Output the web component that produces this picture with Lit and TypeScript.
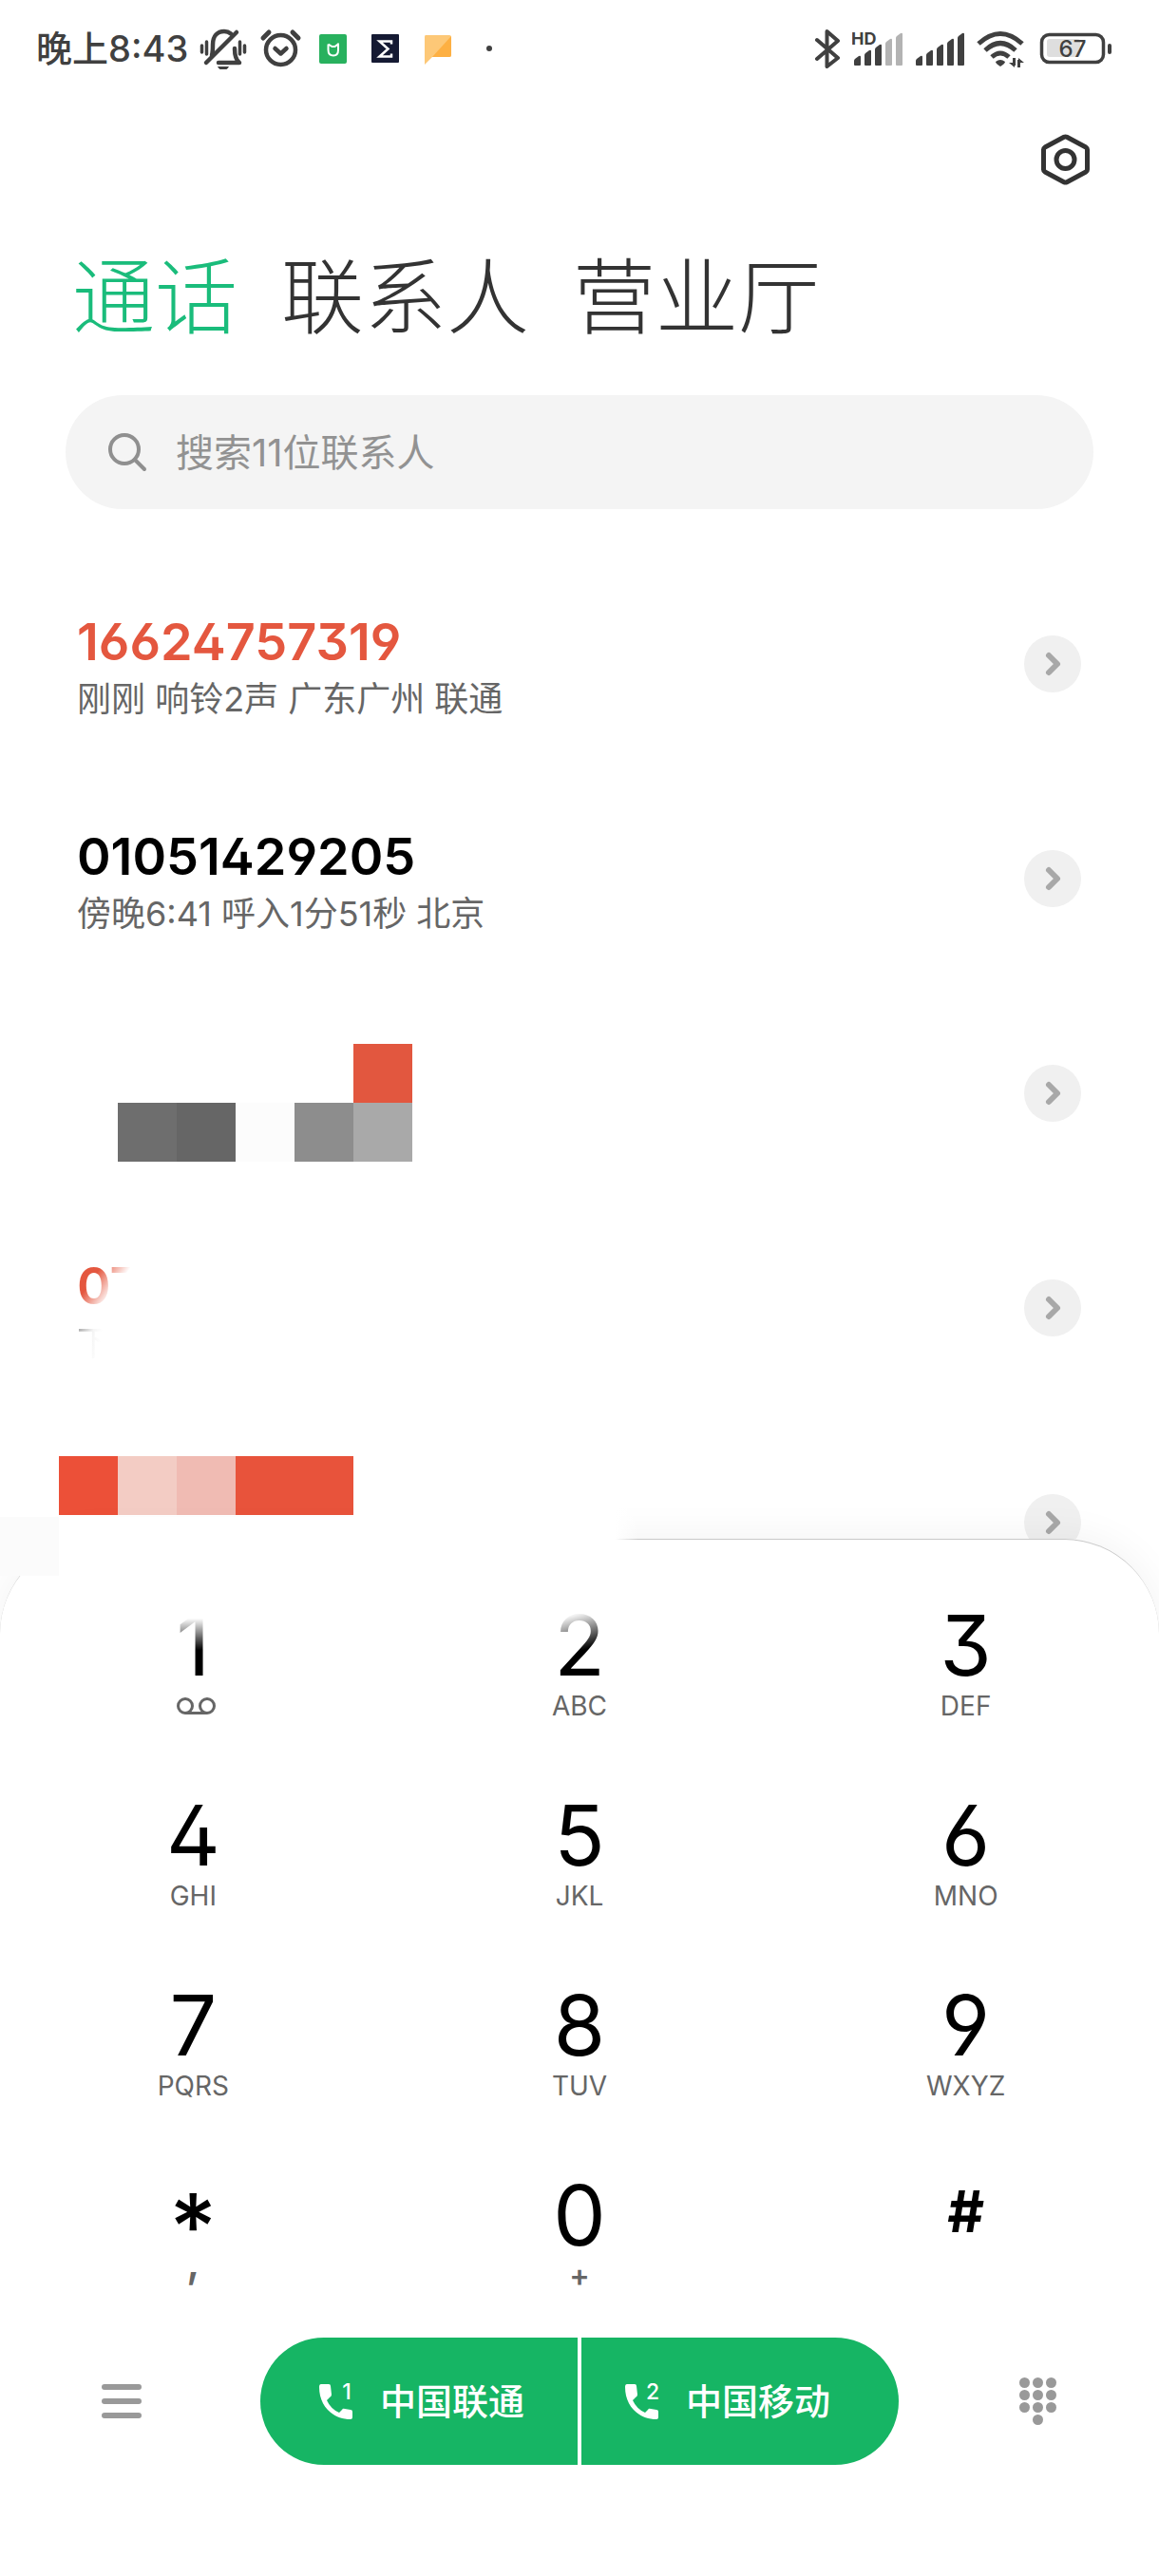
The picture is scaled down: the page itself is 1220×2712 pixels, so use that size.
import { LitElement, html, css, svg, nothing } from "lit";
import { customElement, property } from "lit/decorators.js";
import { classMap } from "lit/directives/class-map.js";

interface CallRecord {
  number?: string;
  detail?: string;
  missed?: boolean;
  faded?: boolean;
  tiles?: string[];
  tileTop?: "low" | "high";
}

const CALLS: CallRecord[] = [
  { number: "16624757319", detail: "刚刚 响铃2声 广东广州 联通", missed: true },
  { number: "01051429205", detail: "傍晚6:41 呼入1分51秒 北京" },
  {
    tiles: ["", "", "", "", "", "t-red", "", "t-g1", "t-g2", "t-pale", "t-g3", "t-g4"],
    tileTop: "low",
  },
  { number: "07", detail: "下", missed: true, faded: true },
  { tiles: ["t-r1", "t-r2", "t-r3", "t-r4", "t-r4", ""], tileTop: "high" },
];

const KEYS: { digit: string; sub: string; kind?: string }[] = [
  { digit: "1", sub: "voicemail", kind: "fade-one" },
  { digit: "2", sub: "ABC", kind: "fade-two" },
  { digit: "3", sub: "DEF" },
  { digit: "4", sub: "GHI" },
  { digit: "5", sub: "JKL" },
  { digit: "6", sub: "MNO" },
  { digit: "7", sub: "PQRS" },
  { digit: "8", sub: "TUV" },
  { digit: "9", sub: "WXYZ" },
  { digit: "*", sub: ",", kind: "star" },
  { digit: "0", sub: "+", kind: "zero" },
  { digit: "#", sub: "", kind: "hash" },
];

const FONT = css`Inter, "Noto Sans CJK SC", sans-serif`;

@customElement("status-bar")
class StatusBar extends LitElement {
  static styles = css`
    :host {
      display: flex;
      align-items: center;
      justify-content: space-between;
      height: 102px;
      padding: 0 50px 0 38px;
      color: #404040;
      font-family: ${FONT};
    }
    .side {
      display: flex;
      align-items: center;
    }
    .right {
      gap: 13px;
    }
    .time {
      margin-right: 8px;
      font-size: 38px;
      font-weight: 500;
      line-height: 48px;
      white-space: nowrap;
    }
    svg {
      display: block;
      flex: none;
    }
    .label {
      font-family: ${FONT};
      fill: #404040;
    }
    .hd {
      font-size: 18px;
      font-weight: 700;
    }
    .level {
      font-size: 24px;
      font-weight: 500;
    }
  `;

  private bars(x: number, lit: number) {
    return [0, 1, 2, 3, 4].map((i) => {
      const left = x + i * 11;
      const top = 27 - i * 6;
      return svg`<path
        d="M${left} 35V${top + 4}q0-1 1-2l4-3q2-1 2 1V35q0 1-1 1h-5q-1 0-1-1z"
        fill=${i < lit ? "#404040" : "#b3b3b3"} />`;
    });
  }

  render() {
    return html`
      <div class="side">
        <span class="time">晚上8:43</span>
        <svg width="62" height="44" viewBox="0 0 62 44" fill="none" stroke="#404040" stroke-width="4.500" stroke-linecap="round" stroke-linejoin="round" aria-label="静音">
          <path d="M17 29c1-3 1-6 1-11 0-9 5-14 12-14 3 0 5 .8 7 2.500" />
          <path d="M11 37 43 5" />
          <path d="M24 37h22c-4-3-5-8-5-15" />
          <path d="M23 41h12q-2 4-6 4t-6-4z" fill="#404040" stroke="none" />
          <path d="M6.500 19v7M11.500 15v13M46.500 15v13M51.500 19v7" stroke-width="3.500" />
        </svg>
        <svg width="55" height="44" viewBox="0 0 55 44" fill="none" stroke="#404040" stroke-width="4.500" stroke-linecap="round" stroke-linejoin="round" aria-label="闹钟">
          <circle cx="27.500" cy="23.500" r="15.500" />
          <path d="m21.500 22 6 5.500 6-5.500" />
          <path d="m9 11 6-6M46 11l-6-6" stroke-width="5" />
        </svg>
        <svg width="55" height="44" viewBox="0 0 55 44" aria-hidden="true">
          <rect x="13" y="7" width="29" height="31" rx="2" fill="#28b15e" />
          <path d="M22.500 17.500v6q0 6 5.500 6 5 0 5-6v-7M22.500 17.500l4 2.500h3l4-3" fill="none" stroke="#fff" stroke-width="2" />
        </svg>
        <svg width="55" height="44" viewBox="0 0 55 44" aria-hidden="true">
          <rect x="13" y="7" width="29" height="30" rx="1" fill="#151a33" />
          <path d="M34 17.500v-3H21.500l9 8-9 8H34v-3" fill="none" stroke="#fff" stroke-width="2.500" />
        </svg>
        <svg width="55" height="44" viewBox="0 0 55 44" aria-hidden="true">
          <path d="M15 8h25q2 0 2 2v19q0 2-2 2H22l-8 8V10q0-2 1-2z" fill="#fdc877" />
          <path d="M42 9v20q0 2-2 2H22z" fill="#fdb043" />
        </svg>
        <svg width="55" height="44" viewBox="0 0 55 44" aria-hidden="true">
          <circle cx="27" cy="22" r="3" fill="#404040" />
        </svg>
      </div>
      <div class="side right">
        <svg width="26" height="44" viewBox="0 0 26 44" fill="none" stroke="#404040" stroke-width="4" stroke-linecap="round" stroke-linejoin="round" aria-label="蓝牙">
          <path d="M2 13 24 32 12.500 41V4L24 14 2 33" />
        </svg>
        <svg width="54" height="44" viewBox="0 0 54 44">
          <g transform="translate(0 4)">${this.bars(2, 3)}</g>
          <text class="label hd" x="-1" y="18">HD</text>
        </svg>
        <svg width="51" height="44" viewBox="0 0 51 44" aria-label="信号">
          <g transform="translate(0 4)">${this.bars(0, 5)}</g>
        </svg>
        <svg width="51" height="44" viewBox="0 0 51 44" fill="none" stroke="#404040" stroke-width="5" stroke-linecap="butt" aria-label="无线网络">
          <path d="M2 17Q25 -4 48 17" />
          <path d="M9 24q16-15 32 0" />
          <path d="M16 31q9-8 18 0" />
          <path d="M20 36q5-4 10 0 0 2-5 5-5-3-5-5z" fill="#404040" stroke="none" />
          <path d="M39.500 32v8M44.500 42v-8" stroke-width="3" />
          <path d="m34 37 6 5v-5zM50 37l-6-5v5z" fill="#404040" stroke="none" />
        </svg>
        <svg width="78" height="44" viewBox="0 0 78 44" aria-label="电量">
          <rect x="10" y="12" width="35" height="19" rx="3" fill="#dedede" />
          <rect x="4.500" y="7.500" width="65" height="29" rx="8" fill="none" stroke="#404040" stroke-width="3.500" />
          <rect x="74" y="17" width="4" height="11" rx="2" fill="#404040" />
          <text class="label level" x="37" y="31" text-anchor="middle">67</text>
        </svg>
      </div>
    `;
  }
}

@customElement("call-row")
class CallRow extends LitElement {
  @property({ attribute: false }) record: CallRecord = {};

  static styles = css`
    :host {
      display: flex;
      align-items: center;
      justify-content: space-between;
      flex: none;
      box-sizing: border-box;
      height: 226px;
      padding: 0 82px 0 62px;
      font-family: ${FONT};
    }
    .text {
      align-self: flex-start;
      padding: 60px 0 0 19px;
    }
    .number {
      font-size: 54px;
      font-weight: 600;
      line-height: 60px;
      color: #000;
      font-feature-settings: "cv09", "ss01";
    }
    .missed {
      color: #e4573f;
    }
    .detail {
      font-size: 36px;
      line-height: 60px;
      color: #666;
      white-space: nowrap;
    }
    .faded .number,
    .faded .detail {
      width: 72px;
      color: transparent;
      -webkit-background-clip: text;
      background-clip: text;
    }
    .faded .number {
      background-image: linear-gradient(125deg, #e4573f 28%, rgb(228 87 63 / 0) 56%);
    }
    .faded .detail {
      background-image: linear-gradient(100deg, #999, rgb(153 153 153 / 10%) 24%, rgb(153 153 153 / 0) 36%);
    }
    .mosaic {
      align-self: flex-start;
      display: grid;
      grid-template-columns: repeat(6, 62px);
      grid-auto-rows: 62px;
    }
    .low {
      margin-top: 61px;
    }
    .high {
      margin-top: 43px;
    }
    .t-red { background: #e2573f; }
    .t-g1 { background: #6e6e6e; }
    .t-g2 { background: #666; }
    .t-pale { background: #fcfcfc; }
    .t-g3 { background: #8d8d8d; }
    .t-g4 { background: #a9a9a9; }
    .t-r1 { background: #ec5038; }
    .t-r2 { background: #f3ccc4; }
    .t-r3 { background: #f0bbb3; }
    .t-r4 { background: #e8533b; }
    .more {
      display: flex;
      align-items: center;
      justify-content: center;
      width: 60px;
      height: 60px;
      padding: 0;
      border: 0;
      border-radius: 50%;
      background: #f0f0f0;
    }
  `;

  render() {
    const { number, detail, missed, faded, tiles, tileTop } = this.record;
    return html`
      ${tiles
        ? html`<div class="mosaic ${tileTop ?? ""}">${tiles.map((t) => html`<span class=${t}></span>`)}</div>`
        : html`<div class=${classMap({ text: true, faded: !!faded })}>
            <div class=${classMap({ number: true, missed: !!missed })}>${number}</div>
            <div class="detail">${detail}</div>
          </div>`}
      <button class="more" aria-label="详情">
        <svg width="28" height="32" viewBox="0 0 28 32" fill="none" stroke="#a8a8a8" stroke-width="6" stroke-linecap="round" stroke-linejoin="round">
          <path d="m10 7 9 9-9 9" />
        </svg>
      </button>
    `;
  }
}

@customElement("dial-pad")
class DialPad extends LitElement {
  static styles = css`
    :host {
      display: block;
      position: relative;
      flex: none;
      box-sizing: border-box;
      padding: 31px 0 117px;
      border: 1px solid #c8c8c8;
      border-width: 1px 0 0;
      border-radius: 100px 100px 0 0;
      background: #fff;
      box-shadow: 0 -4px 40px rgb(0 0 0 / 5%);
      font-family: ${FONT};
    }
    /* Whites out the left part of the sheet's upper edge, around the mosaic above it. */
    .veil {
      position: absolute;
      top: -60px;
      left: 62px;
      width: 50%;
      height: 110px;
      background: linear-gradient(90deg, #fff 96%, rgb(255 255 255 / 0));
      clip-path: polygon(0 36px, 310px 36px, 310px 0, 100% 0, 100% 100%, 0 100%);
    }
    .veil-corner {
      position: absolute;
      top: -24px;
      left: 0;
      width: 62px;
      height: 62px;
      background: #fbfbfb;
    }
    .keys {
      display: grid;
      grid-template-columns: repeat(3, 1fr);
      position: relative;
    }
    button {
      font: inherit;
      border: 0;
      background: none;
      padding: 0;
    }
    .key {
      display: flex;
      flex-direction: column;
      align-items: center;
      height: 200px;
      padding-top: 36px;
    }
    .digit {
      font-size: 88px;
      line-height: 88px;
      color: #000;
      font-feature-settings: "cv09", "ss01";
    }
    .fade-one .digit,
    .fade-two .digit {
      color: transparent;
      -webkit-background-clip: text;
      background-clip: text;
    }
    .fade-one .digit {
      background-image: linear-gradient(180deg, rgb(0 0 0 / 0) 18%, #000 56%);
    }
    .fade-two .digit {
      background-image: linear-gradient(165deg, rgb(0 0 0 / 5%) 18%, #000 56%);
    }
    .sub {
      display: flex;
      align-items: center;
      height: 40px;
      font-size: 28px;
      line-height: 40px;
      color: #666;
    }
    .star .digit {
      box-sizing: border-box;
      height: 88px;
      padding-top: 12px;
      font-size: 96px;
      font-weight: 500;
    }
    .star .sub {
      height: 8px;
      font-size: 48px;
      font-weight: 500;
    }
    .zero .sub {
      font-size: 32px;
      font-weight: 600;
    }
    .hash .digit {
      font-size: 60px;
      font-weight: 700;
      line-height: 80px;
    }
    .actions {
      position: relative;
      display: grid;
      grid-template-columns: 1fr 672px 1fr;
      align-items: center;
      padding-top: 9px;
    }
    .tool {
      display: flex;
      justify-content: center;
      align-items: center;
      height: 134px;
    }
    .tool-left {
      padding-right: 18px;
    }
    .tool-right {
      padding-left: 92px;
      justify-content: flex-start;
    }
    .sims {
      display: grid;
      grid-template-columns: 1fr 1fr;
      gap: 4px;
    }
    .sim {
      display: flex;
      align-items: center;
      gap: 26px;
      height: 134px;
      background: #16b564;
      color: #fff;
      font-size: 38px;
      font-weight: 500;
      line-height: 48px;
      white-space: nowrap;
    }
    .sim-one {
      padding-left: 60px;
      border-radius: 67px 0 0 67px;
    }
    .sim-two {
      padding-left: 44px;
      border-radius: 0 67px 67px 0;
    }
    .slot {
      font-family: ${FONT};
      font-size: 23px;
      font-weight: 500;
      fill: #fff;
    }
    svg {
      display: block;
    }
  `;

  private sim(slot: number, name: string) {
    return html`<button class="sim ${slot === 1 ? "sim-one" : "sim-two"}">
      <svg width="40" height="56" viewBox="0 -8 40 56" aria-hidden="true">
        <path d="M4 2h8q2 0 2 2l1 9q0 2-2 3l-3 3q4 9 13 13l3-3q1-2 3-1l6 1q2 0 2 2v6q0 2-2 2C16 39 2 25 2 5q0-3 2-3z" fill="#fff" />
        <text class="slot" x="31" y="18" text-anchor="middle">${slot}</text>
      </svg>
      <span>${name}</span>
    </button>`;
  }

  render() {
    return html`
      <div class="veil-corner"></div>
      <div class="veil"></div>
      <div class="keys">
        ${KEYS.map(
          (k) => html`<button class="key ${k.kind ?? ""}">
            <span class="digit">${k.digit}</span>
            ${k.sub === "voicemail"
              ? html`<span class="sub"><svg width="48" height="18" viewBox="-8 0 48 18" fill="none" stroke="#666" stroke-width="3" aria-label="语音信箱">
                  <circle cx="8" cy="9" r="7.500" /><circle cx="31" cy="9" r="7.500" /><path d="M8 16.500h23" />
                </svg></span>`
              : k.sub
                ? html`<span class="sub">${k.sub}</span>`
                : nothing}
          </button>`
        )}
      </div>
      <div class="actions">
        <button class="tool tool-left" aria-label="菜单">
          <svg width="42" height="36" viewBox="0 0 42 36" stroke="#999" stroke-width="6" stroke-linecap="round">
            <path d="M3 3h36M3 18h36M3 33h36" />
          </svg>
        </button>
        <div class="sims">${this.sim(1, "中国联通")}${this.sim(2, "中国移动")}</div>
        <button class="tool tool-right" aria-label="收起键盘">
          <svg width="80" height="52" viewBox="0 0 80 52" fill="#999">
            ${[0, 1, 2, 3].map((r) =>
              [0, 1, 2].map((c) =>
                r < 3 || c === 1 ? svg`<circle cx=${40.5 + c * 14} cy=${6.5 + r * 13} r="5.500" />` : nothing
              )
            )}
          </svg>
        </button>
      </div>
    `;
  }
}

@customElement("app-root")
class AppRoot extends LitElement {
  static styles = css`
    :host {
      display: flex;
      flex-direction: column;
      height: 100vh;
      overflow: hidden;
      background: #fff;
      font-family: ${FONT};
    }
    button {
      font: inherit;
      padding: 0;
      border: 0;
      background: none;
    }
    header {
      flex: none;
      padding: 36px 69px 0;
    }
    .settings {
      display: block;
      margin-left: auto;
    }
    .settings svg {
      display: block;
    }
    .tabs {
      display: flex;
      gap: 46px;
      padding: 64px 0 50px 7px;
    }
    .tab {
      font-size: 87px;
      font-weight: 300;
      line-height: 104px;
      color: #333;
      white-space: nowrap;
    }
    .active {
      color: #1abc7b;
    }
    .search {
      display: flex;
      align-items: center;
      gap: 30px;
      height: 120px;
      padding: 0 44px;
      border-radius: 60px;
      background: #f4f4f4;
    }
    .search svg {
      flex: none;
    }
    .search input {
      flex: 1;
      min-width: 0;
      height: 60px;
      padding: 0;
      border: 0;
      outline: 0;
      background: none;
      font: inherit;
      font-size: 40px;
      color: #333;
    }
    .search input::placeholder {
      color: #929292;
      opacity: 1;
    }
    .calls {
      display: flex;
      flex-direction: column;
      flex: 1 1 0;
      min-height: 0;
      padding-top: 50px;
      overflow: hidden;
    }
  `;

  render() {
    return html`
      <status-bar></status-bar>
      <header>
        <button class="settings" aria-label="设置">
          <svg width="60" height="60" viewBox="0 0 60 60" fill="none" stroke="#333" stroke-width="5" stroke-linejoin="round">
            <path d="M29 6.300q1.500-.8 3 0L52 17q1.500 1 1.500 2.500v21q0 1.500-1.500 2.500L32 53.700q-1.500.8-3 0L9 43q-1.500-1-1.500-2.500v-21Q7.500 18 9 17z" />
            <circle cx="30.500" cy="30" r="9.500" />
          </svg>
        </button>
        <nav class="tabs">
          <button class="tab active">通话</button>
          <button class="tab">联系人</button>
          <button class="tab">营业厅</button>
        </nav>
        <label class="search">
          <svg width="42" height="42" viewBox="0 0 42 42" fill="none" stroke="#8f8f8f" stroke-width="4" stroke-linecap="round" aria-hidden="true">
            <circle cx="18" cy="18" r="15" /><path d="m29 29 10 10" />
          </svg>
          <input type="search" placeholder="搜索11位联系人" aria-label="搜索联系人" />
        </label>
      </header>
      <main class="calls">${CALLS.map((c) => html`<call-row .record=${c}></call-row>`)}</main>
      <dial-pad></dial-pad>
    `;
  }
}
